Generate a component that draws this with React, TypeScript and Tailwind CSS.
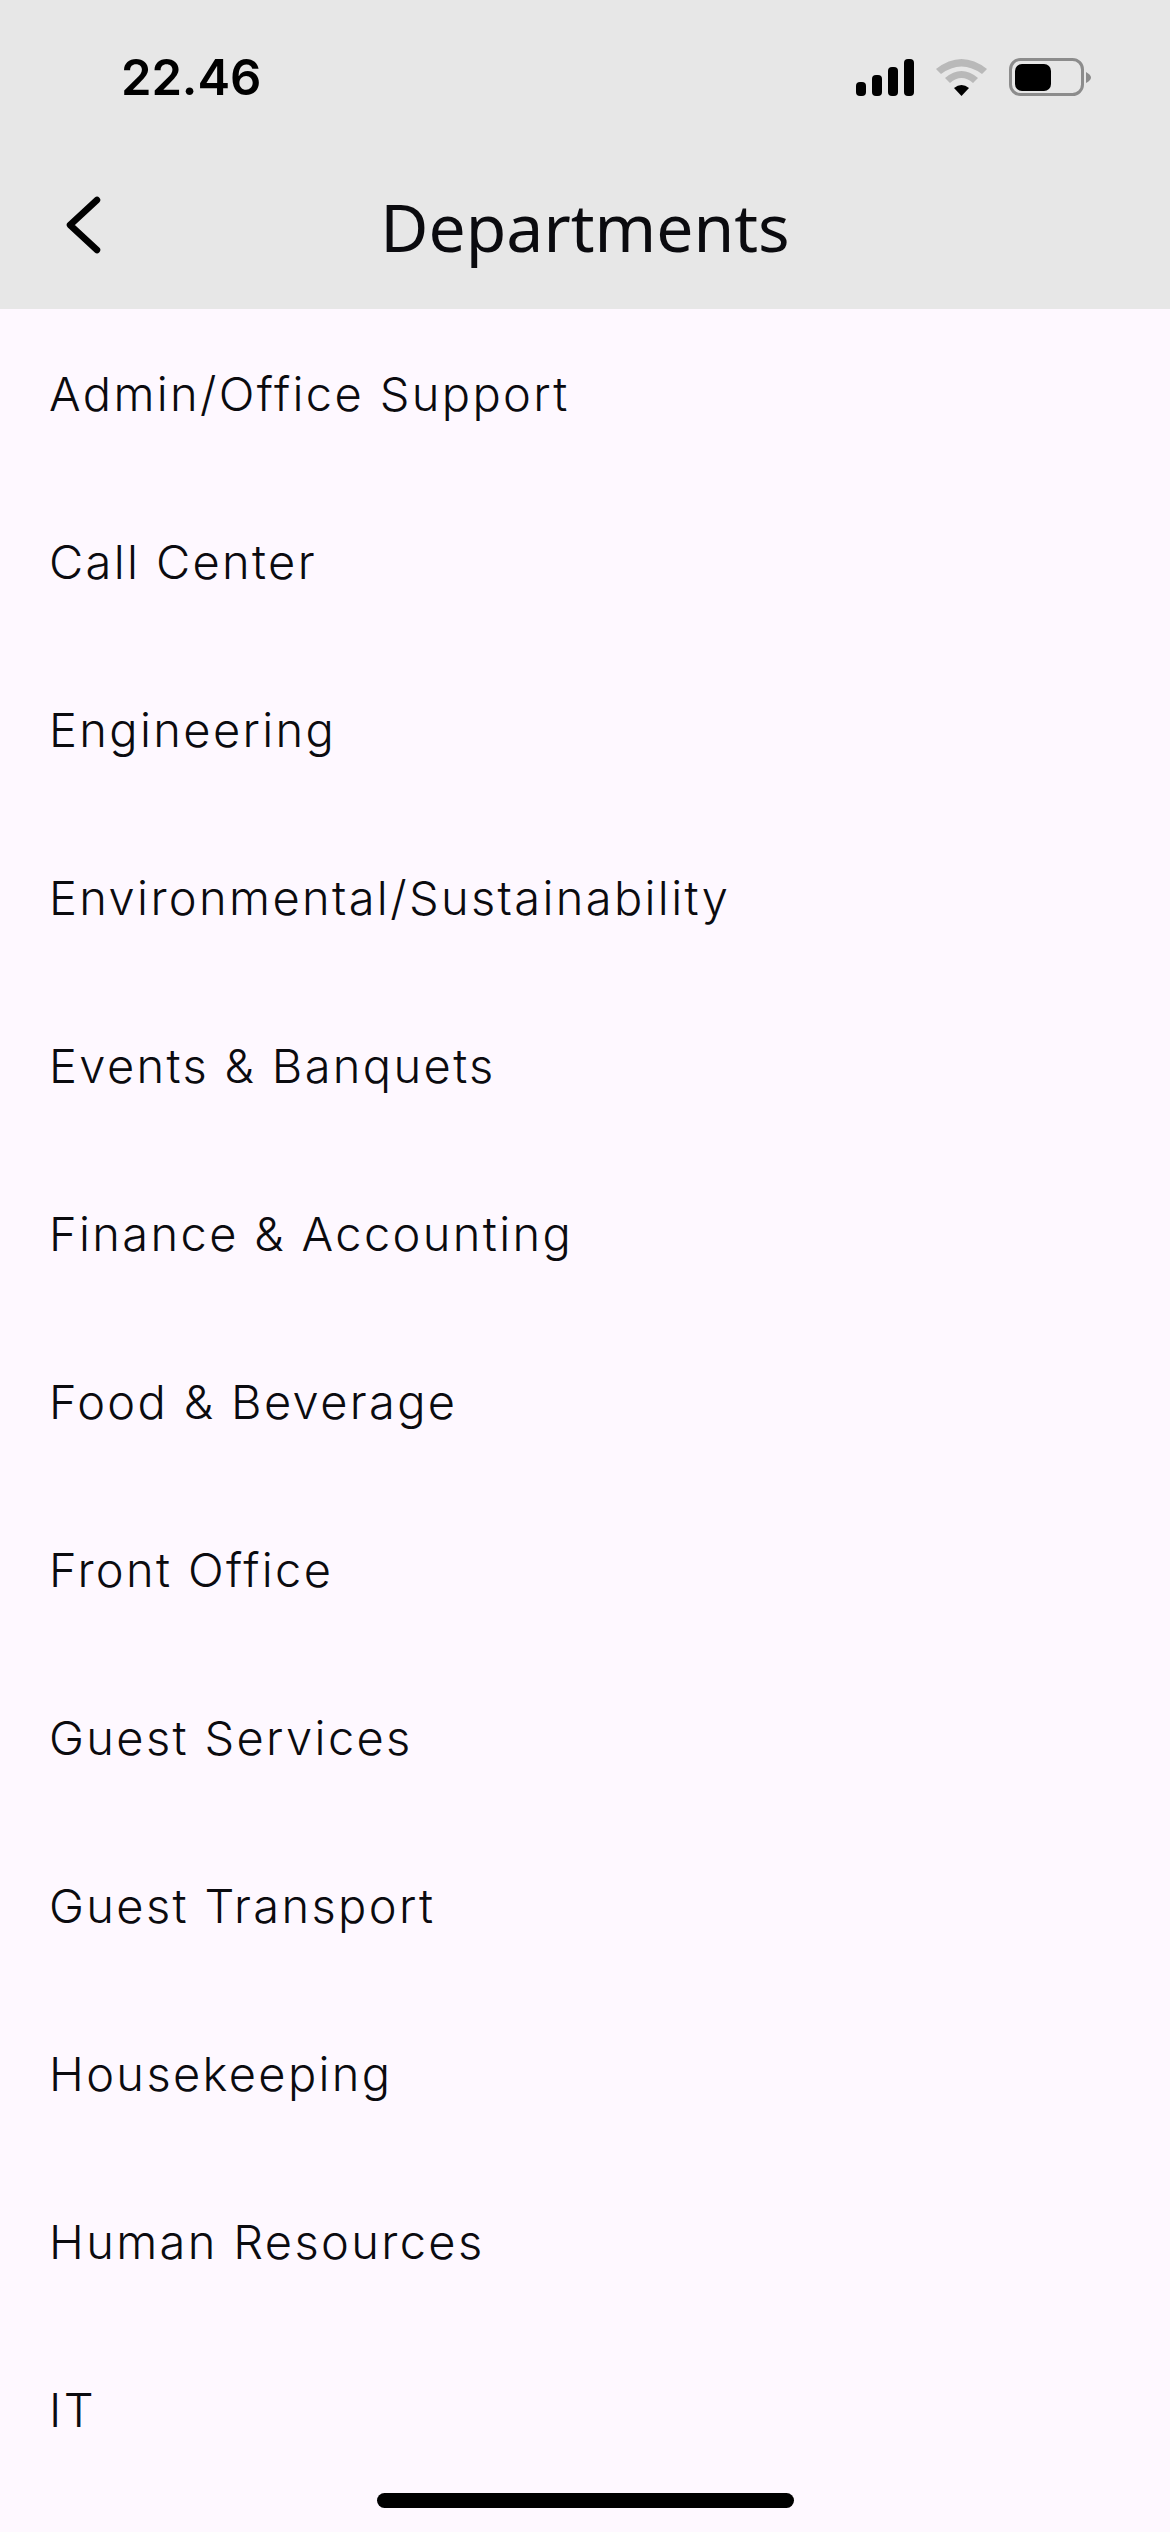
const items = ["Admin/Office Support","Call Center","Engineering","Environmental/Sustainability","Events & Banquets","Finance & Accounting","Food & Beverage","Front Office","Guest Services","Guest Transport","Housekeeping","Human Resources","IT"];

export default function App() {
  return (
    <div className="relative h-[2532px] w-[1170px] overflow-hidden bg-[#fef8ff] text-[#0b0b0f]">
      <header className="h-[309px] bg-[#e7e7e7]">
        <div className="flex h-[141px] items-start justify-between pl-[121px] pr-[74px]">
          <span className="mt-[48px] text-[49px] font-semibold leading-[60px] tracking-[-0.1px] text-black [font-family:Inter,sans-serif]">22.46</span>
          <svg className="mt-[58px]" width="240" height="40" viewBox="0 0 240 40">
            <rect x="0" y="24" width="10" height="14" rx="4" fill="#000" />
            <rect x="16" y="17" width="10" height="21" rx="4" fill="#000" />
            <rect x="32" y="9" width="10" height="29" rx="4" fill="#000" />
            <rect x="48" y="1" width="10" height="37" rx="4" fill="#000" />
            <path d="M80 11 Q105.5 -9 131 11 L126 16 Q105.5 1 85 16 Z" fill="#b9b9b9" />
            <path d="M89 20 Q105.5 6 122 20 L117 25 Q105.5 15 94 25 Z" fill="#b9b9b9" />
            <path d="M98 30 Q105.5 24 113 30 L105.5 38 Z" fill="#000" />
            <rect x="154.5" y="1.5" width="72" height="35" rx="10" fill="none" stroke="#8c8c8c" strokeWidth="3" />
            <rect x="159" y="6" width="36" height="27" rx="7" fill="#000" />
            <path d="M230 14 Q240 19.5 230 25 Z" fill="#8c8c8c" />
          </svg>
        </div>
        <div className="flex h-[168px] items-center">
          <svg className="absolute left-[60px] top-[193px]" width="50" height="66" viewBox="0 0 50 66" fill="none">
            <path d="M37 7 L10 32 L37 57" stroke="#000" strokeWidth="6.5" strokeLinecap="round" strokeLinejoin="round" />
          </svg>
          <h1 className="mt-[2px] w-full text-center text-[66px] font-normal leading-[80px] [font-family:'Noto_Sans',sans-serif]">Departments</h1>
        </div>
      </header>
      <ul className="pt-[1px]">
        {items.map((t) => (
          <li key={t} className="flex h-[168px] items-center pl-[49px] text-[47px] font-[350] leading-[56px] tracking-[2.35px] [font-family:Inter,sans-serif]">{t}</li>
        ))}
      </ul>
      <div className="absolute left-[377px] top-[2493px] h-[15px] w-[417px] rounded-full bg-black" />
    </div>
  );
}
